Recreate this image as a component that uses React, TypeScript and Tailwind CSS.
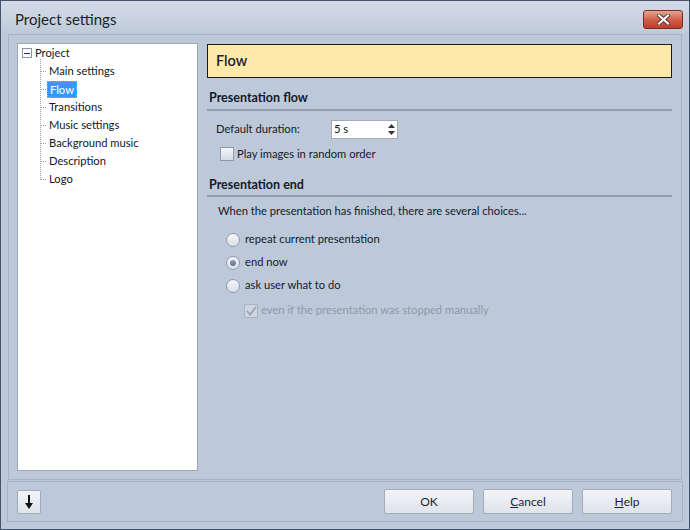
import React from 'react';

const font = { fontFamily: 'Lato, "Noto Sans", sans-serif' };

const treeItems = ['Main settings', 'Flow', 'Transitions', 'Music settings', 'Background music', 'Description', 'Logo'];

function Radio({ checked, label }: { checked?: boolean; label: string }) {
  return (
    <div className="flex h-[23px] items-center gap-[5px]">
      <span className="flex h-[14px] w-[14px] items-center justify-center rounded-full border border-[#8e9aab] bg-gradient-to-b from-[#f4f6f9] to-[#d9dfe8]">
        {checked ? <span className="h-[6px] w-[6px] rounded-full bg-gradient-to-b from-[#8fa0b8] to-[#5e7393]" /> : null}
      </span>
      <span>{label}</span>
    </div>
  );
}

function DialogButton({ children }: { children: React.ReactNode }) {
  return (
    <button className="flex h-[25px] w-[90px] items-center justify-center rounded-[2px] border border-[#a2abb8] bg-gradient-to-b from-[#f2f4f7] to-[#dfe3ea] text-[12px] text-[#1e2430]">
      {children}
    </button>
  );
}

export default function App() {
  return (
    <div
      style={font}
      className="flex h-[530px] w-[690px] flex-col border border-[#44546c] bg-[#bdc9d9] text-[11.2px] text-[#141a28]"
    >
      {/* title bar */}
      <div className="flex h-[33px] shrink-0 items-center justify-between bg-gradient-to-b from-[#d4dce8] to-[#bfcad9] pl-[14px] pr-[6px]">
        <span className="pt-[4px] text-[15px] text-[#1a1f2a]">Project settings</span>
        <button className="mt-[4px] flex h-[19px] w-[40px] items-center justify-center rounded-[3px] border border-[#7a2b22] bg-gradient-to-b from-[#e7a493] via-[#d0604b] to-[#bd3e2a]">
          <svg width="13" height="11" viewBox="0 0 13 11">
            <path d="M2 1.5 L11 9.5 M11 1.5 L2 9.5" stroke="#5a3a36" strokeWidth="4" strokeLinecap="square" />
            <path d="M2 1.5 L11 9.5 M11 1.5 L2 9.5" stroke="#ffffff" strokeWidth="2" strokeLinecap="square" />
          </svg>
        </button>
      </div>

      {/* main frame */}
      <div className="mx-[7px] flex min-h-0 flex-1 gap-[9px] border border-[#a7b3c4] p-[8px]">
        {/* tree */}
        <div className="relative w-[181px] shrink-0 border border-[#9ba6b5] bg-white text-[11.2px] text-[#101828]">
          <div className="flex h-[18px] items-center pl-[4px]">
            <span className="flex h-[10px] w-[10px] items-center justify-center border border-[#8c95a3] bg-white">
              <span className="h-[1px] w-[6px] bg-[#1e2a60]" />
            </span>
            <span className="ml-[3px]">Project</span>
          </div>
          <div className="absolute left-[22px] top-[15px] h-[121px] border-l border-dotted border-[#a0a0a0]" />
          {treeItems.map((item) => (
            <div key={item} className="flex h-[18px] items-center pl-[22px]">
              <span className="w-[6px] border-t border-dotted border-[#a0a0a0]" />
              {item === 'Flow' ? (
                <span className="ml-[1px] border border-dotted border-[#e0a050] bg-[#3399ff] px-[2px] leading-[15px] text-white">
                  {item}
                </span>
              ) : (
                <span className="ml-[3px]">{item}</span>
              )}
            </div>
          ))}
        </div>

        {/* right panel */}
        <div className="flex-1 pr-[1px]">
          <div className="mt-[1px] flex h-[34px] items-center border border-[#1a1a1a] bg-[#fee9aa] pl-[8px] text-[14.5px] font-semibold text-[#1c2230]">
            Flow
          </div>

          <div className="mt-[11px] border-b-2 border-[#949fae] pb-[1px] pl-[2px] text-[12.5px] font-bold">Presentation flow</div>

          <div className="mt-[9px] flex items-center pl-[9px]">
            <span className="w-[115px]">Default duration:</span>
            <div className="flex h-[19px] w-[67px] items-center justify-between border border-[#a2abb8] bg-white pl-[2px] pr-[1px]">
              <span>5 s</span>
              <svg width="9" height="15" viewBox="0 0 9 15">
                <path d="M4.5 2 L8 6 L1 6 Z" fill="#333" />
                <path d="M4.5 13 L8 9 L1 9 Z" fill="#333" />
              </svg>
            </div>
          </div>

          <div className="mt-[7px] flex items-center gap-[3px] pl-[13px]">
            <span className="h-[14px] w-[14px] border border-[#8e9aab] bg-gradient-to-b from-[#f4f6f9] to-[#d5dbe4]" />
            <span>Play images in random order</span>
          </div>

          <div className="mt-[13px] border-b-2 border-[#949fae] pb-[1px] pl-[2px] text-[12.5px] font-bold">Presentation end</div>

          <div className="mt-[6px] pl-[11px]">When the presentation has finished, there are several choices...</div>

          <div className="mt-[8px] flex flex-col pl-[19px]">
            <Radio label="repeat current presentation" />
            <Radio checked label="end now" />
            <Radio label="ask user what to do" />
            <div className="flex h-[26px] items-center gap-[3px] pl-[18px] pt-[1px] text-[#8e99a8]">
              <span className="flex h-[14px] w-[14px] items-center justify-center border border-[#a9b3c1] bg-[#cdd5e0]">
                <svg width="11" height="10" viewBox="0 0 11 10">
                  <path d="M1 5 L4 8.5 L10 1" stroke="#9aa5b4" strokeWidth="1.8" fill="none" />
                </svg>
              </span>
              <span>even if the presentation was stopped manually</span>
            </div>
          </div>
        </div>
      </div>

      {/* bottom frame */}
      <div className="mx-[6px] mb-[7px] mt-[1px] flex h-[41px] shrink-0 items-center justify-between border border-[#a7b3c4] pl-[9px] pr-[10px]">
        <button className="flex h-[24px] w-[24px] items-center justify-center rounded-[2px] border border-[#a2abb8] bg-gradient-to-b from-[#f2f4f7] to-[#dfe3ea]">
          <svg width="10" height="16" viewBox="0 0 10 16">
            <path d="M4 1 H6 V9 H9 L5 15 L1 9 H4 Z" fill="#111" />
          </svg>
        </button>
        <div className="flex gap-[9px]">
          <DialogButton>OK</DialogButton>
          <DialogButton>
            <span className="underline">C</span>ancel
          </DialogButton>
          <DialogButton>
            <span className="underline">H</span>elp
          </DialogButton>
        </div>
      </div>
    </div>
  );
}
